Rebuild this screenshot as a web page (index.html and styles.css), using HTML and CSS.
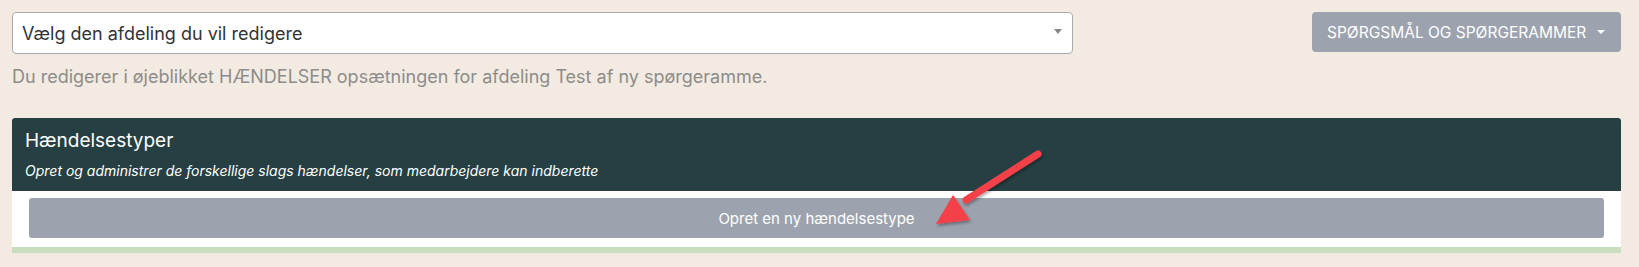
FILE: index.html
```html
<!DOCTYPE html>
<html lang="da">
<head>
  <meta charset="UTF-8">
  <title>Hændelser</title>
  <meta name="viewport" content="width=device-width, initial-scale=1.0">
  <link rel="stylesheet" href="styles.css">
</head>
<body>
  <div class="page">
    <div class="top-row">
      <div class="select-wrap">
        <div class="dept-select">
          <span>Vælg den afdeling du vil redigere</span>
          <span class="select-caret"></span>
        </div>
        <div class="help-text">Du redigerer i øjeblikket HÆNDELSER opsætningen for afdeling Test af ny spørgeramme.</div>
      </div>
      <button class="menu-btn">SPØRGSMÅL OG SPØRGERAMMER <span class="btn-caret"></span></button>
    </div>

    <div class="card">
      <div class="card-head">
        <div class="card-title">Hændelsestyper</div>
        <div class="card-sub">Opret og administrer de forskellige slags hændelser, som medarbejdere kan indberette</div>
      </div>
      <div class="card-body">
        <button class="create-btn">Opret en ny hændelsestype</button>
      </div>
    </div>

    <svg class="callout-arrow" width="130" height="90" viewBox="0 0 130 90">
      <defs>
        <filter id="sh" x="-20%" y="-20%" width="150%" height="150%">
          <feDropShadow dx="1" dy="2" stdDeviation="1.5" flood-color="#000" flood-opacity="0.35"/>
        </filter>
      </defs>
      <g filter="url(#sh)">
        <line x1="106" y1="13" x2="34" y2="59" stroke="#f4414a" stroke-width="7" stroke-linecap="round"/>
        <polygon points="4,83 21,54 38,79" fill="#f4414a"/>
      </g>
    </svg>
  </div>
</body>
</html>
```

FILE: styles.css
```css
body { margin: 0; background: #f3ebe1; font-family: Inter, "Noto Sans", Arial, sans-serif; }
.page { position: relative; padding: 12px 18px 14px 12px; }
.top-row { display: flex; justify-content: space-between; align-items: flex-start; }
.select-wrap { width: 1061px; }
.dept-select { height: 42px; box-sizing: border-box; background: #fff; border: 1px solid #aaa; border-radius: 4px; display: flex; align-items: center; justify-content: space-between; padding: 0 10px 0 9px; font-size: 18px; color: #333; }
.select-caret { width: 0; height: 0; border-left: 4px solid transparent; border-right: 4px solid transparent; border-top: 5px solid #888; margin-bottom: 4px; }
.help-text { margin-top: 10px; font-size: 18px; line-height: 25px; color: #8c8c8c; }
.menu-btn { width: 309px; height: 40px; background: #9ca3ae; color: #fff; border: none; border-radius: 4px; font-family: inherit; font-size: 15.5px; padding: 0 16px 0 15px; display: flex; align-items: center; justify-content: space-between; cursor: pointer; }
.btn-caret { width: 0; height: 0; border-left: 4px solid transparent; border-right: 4px solid transparent; border-top: 4px solid #fff; }
.card { margin-top: 29px; background: #fff; border-bottom: 6px solid #c9dec0; }
.card-head { background: #263f42; color: #fff; padding: 11px 12px 11px 13px; border-radius: 3px 3px 0 0; }
.card-title { font-size: 19px; line-height: 23px; }
.card-sub { margin-top: 9px; font-size: 14px; line-height: 19px; font-style: italic; }
.card-body { padding: 7px 17px 9px 17px; }
.create-btn { display: block; width: 100%; height: 40px; background: #9ca3ae; color: #fff; border: none; border-radius: 3px; font-family: inherit; font-size: 15px; cursor: pointer; }
.callout-arrow { position: absolute; left: 932px; top: 141px; }
```
